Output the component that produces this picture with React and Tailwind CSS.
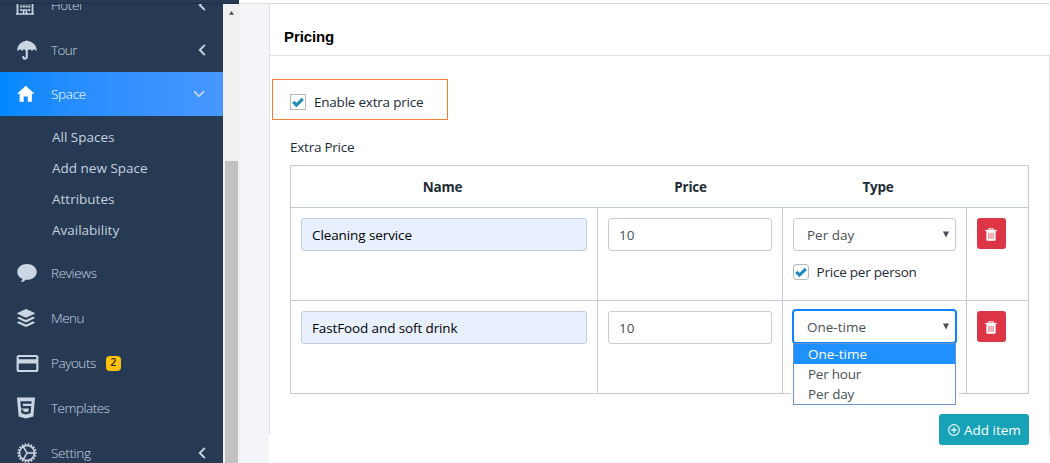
import React from "react";
import {
  IoIosText,
  IoIosAddCircleOutline,
  IoIosArrowBack,
  IoIosArrowDown,
  IoIosCog,
  IoLogoBuffer,
  IoLogoHtml5,
  IoMdCard,
  IoMdHome,
  IoMdUmbrella,
} from "react-icons/io";

function HotelIcon() {
  return (
    <svg className="ml-[-0.5px]" width="20" height="20" viewBox="0 0 20 20" fill="none" stroke="currentColor">
      <path d="M2.500 1v18M17.500 1v18M2 1.500h16" strokeWidth="1.800" />
      <path d="M5.200 5h10M5.200 8.300h10M5.200 11.600h10M5.200 14.900h2M13.200 14.900h2" strokeWidth="2" strokeDasharray="2 0.670" />
      <path d="M8.500 19v-4h3v4M1 19h18" strokeWidth="1.700" />
    </svg>
  );
}

function NavItem({ icon, label, tracking = "", arrow, active, badge }) {
  return (
    <div
      className={
        active
          ? "flex h-[44px] shrink-0 items-center bg-linear-to-r from-[#0088ff] to-[#4797ff] pl-[15px] pr-4 text-white"
          : "mb-px flex h-[44px] shrink-0 items-center pl-[15px] pr-[13px] text-[#cbd5e3]"
      }
    >
      <span className="flex w-[36px] shrink-0 items-center">{icon}</span>
      <span className={"text-[13.5px] font-light leading-5 " + tracking}>{label}</span>
      {badge && (
        <span className="ml-[10px] flex h-[15px] w-[15px] items-center justify-center rounded-[4px] bg-[#ffc107] text-[10.5px] font-semibold text-[#212529]">
          {badge}
        </span>
      )}
      {arrow && <span className="ml-auto flex text-[#cbd5e3]">{arrow}</span>}
    </div>
  );
}

function Collapsed() {
  return <IoIosArrowBack size={16} stroke="currentColor" strokeWidth={20} />;
}

function SubItem({ label, tracking = "" }) {
  return (
    <div className={"flex h-[31px] items-center pl-[52px] text-[13.5px] text-[#c5d1df] " + tracking}>{label}</div>
  );
}

function Checkbox({ rounded = "" }) {
  return (
    <span className={"flex h-4 w-4 shrink-0 items-center justify-center border border-[#b4b9be] bg-white " + rounded}>
      <svg width="12" height="12" viewBox="0 0 12 12" fill="none" stroke="#1e8cbe" strokeWidth="3.100">
        <path d="M1.200 5.800l3.200 3.200 6.400-6.200" />
      </svg>
    </span>
  );
}

function Field({ children, filled, tracking = "" }) {
  return (
    <div
      className={
        (filled ? "bg-[#e8f0fe] pl-[10px] text-black " : "bg-white pl-[10px] text-[#495057] ") +
        "flex h-[33px] items-center rounded-[3px] border border-[#c3cdda] pt-px text-[13.5px] " +
        tracking
      }
    >
      {children}
    </div>
  );
}

function Caret() {
  return (
    <svg className="mb-px" width="6" height="7" viewBox="0 0 6 7" fill="#495057">
      <path d="M0 0.500h6L3 6.500z" />
    </svg>
  );
}

function TrashButton() {
  return (
    <button className="flex h-[31px] w-[29px] items-center justify-center rounded-[3px] bg-[#dc3545] pr-px pt-px text-white">
      <svg width="12" height="13" viewBox="0 0 12 13" fill="none" stroke="currentColor">
        <path d="M0.300 2.500h11.400" strokeWidth="1.300" />
        <path d="M4 2.200V0.700h4v1.500" strokeWidth="1.100" />
        <path d="M1.400 3h9.200v9a.8.8 0 0 1-.8.8H2.200a.8.8 0 0 1-.8-.8z" fill="currentColor" stroke="none" />
        <path d="M3.900 4.700v6.300M6 4.700v6.300M8.100 4.700v6.300" stroke="#dc3545" strokeWidth="0.800" />
      </svg>
    </button>
  );
}

const cell = "border-r border-[#c3cad8] p-[10px]";

export default function App() {
  return (
    <div className="flex h-[463px] w-[1050px] flex-col overflow-hidden bg-white font-['Open_Sans','Noto_Sans',sans-serif] text-[13.5px] text-[#212b36]">
      <div className="flex h-1 shrink-0">
        <div className="w-[239px] border-b border-[#1c2f47] bg-[#263a53]" />
        <div className="ml-px flex-1 border-b border-[#dddddd]" />
      </div>

      <div className="flex h-[459px]">
        <nav className="flex w-[223px] flex-col overflow-hidden bg-[#263a53]">
          <div className="-mt-[21px] flex flex-col">
            <NavItem icon={<HotelIcon />} label="Hotel" tracking="tracking-[-0.4px]" arrow={<Collapsed />} />
            <NavItem icon={<IoMdUmbrella size={24} />} label="Tour" tracking="tracking-[-0.6px]" arrow={<Collapsed />} />
          </div>
          <div className="-mt-px flex flex-col">
            <NavItem
              icon={<IoMdHome size={21.5} />}
              label="Space"
              tracking="tracking-[-0.3px]"
              active
              arrow={<IoIosArrowDown size={16} stroke="currentColor" strokeWidth={12} />}
            />
          </div>
          <div className="flex h-[135px] shrink-0 flex-col pt-[6px]">
            <SubItem label="All Spaces" />
            <SubItem label="Add new Space" />
            <SubItem label="Attributes" />
            <SubItem label="Availability" />
          </div>
          <NavItem icon={<IoIosText size={24} />} label="Reviews" tracking="tracking-[-0.35px]" />
          <NavItem icon={<IoLogoBuffer size={24} className="-ml-px" />} label="Menu" tracking="tracking-[-0.5px]" />
          <NavItem icon={<IoMdCard size={25} />} label="Payouts" tracking="tracking-[-0.45px]" badge="2" />
          <NavItem icon={<IoLogoHtml5 size={24} className="-ml-px" />} label="Templates" tracking="tracking-[-0.5px]" />
          <NavItem icon={<IoIosCog size={24} stroke="currentColor" strokeWidth={6} />} label="Setting" tracking="tracking-[-0.3px]" arrow={<Collapsed />} />
        </nav>

        <div className="flex w-[17px] flex-col items-center bg-[#f0f0f0] pr-px">
          <svg className="mt-[7px] shrink-0" width="5" height="4" viewBox="0 0 5 4" fill="#505050">
            <path d="M2.500 0L5 3.800H0z" />
          </svg>
          <div className="mt-[146px] w-[13px] flex-1 bg-[#c1c1c1]" />
        </div>
        <div className="w-[29px] bg-[#f4f5f8]" />

        <main className="flex w-[781px] flex-col">
          <div className="flex h-[430px] flex-col border-l border-[#dfe2e5]">
            <div className="flex h-[52px] shrink-0 items-center border-b border-[#e1e1e1] pl-[14px] pt-[15px] font-['Liberation_Sans',Arial,sans-serif] text-[15px] font-bold tracking-[-0.1px] text-black">
              Pricing
            </div>
            <div className="flex flex-1 flex-col border-r border-[#e1e1e1]">
              <div className="ml-[2px] mt-[23px] flex h-[41px] w-[176px] items-center gap-2 border border-[#f58233] pl-[17px] pt-[5px]">
                <Checkbox />
                <span className="tracking-[-0.22px]">Enable extra price</span>
              </div>
              <div className="ml-5 mt-[17px] h-5 leading-5 tracking-[-0.25px]">Extra Price</div>

              <div className="ml-5 mt-2 w-[739px] border border-[#c3cad8]">
                <div className="grid h-[42px] grid-cols-[307px_185px_184px_61px] items-center border-b border-[#c3cad8] pt-[2px] text-center font-bold tracking-[-0.2px]">
                  <span className="pr-1">Name</span>
                  <span>Price</span>
                  <span className="pl-1.5">Type</span>
                </div>
                <div className="grid h-[93px] grid-cols-[307px_185px_184px_61px] border-b border-[#c3cad8]">
                  <div className={cell}><Field filled tracking="tracking-[-0.1px]">Cleaning service</Field></div>
                  <div className={cell}><Field>10</Field></div>
                  <div className={cell}>
                    <div className="flex h-[33px] items-center justify-between rounded-[3px] border border-[#c3cdda] pl-[13px] pr-[6px] pt-px text-[#495057]">
                      <span>Per day</span>
                      <Caret />
                    </div>
                    <div className="mt-[13px] flex h-4 items-center gap-[7.5px]">
                      <Checkbox rounded="rounded-[3px]" />
                      <span className="tracking-[-0.22px]">Price per person</span>
                    </div>
                  </div>
                  <div className="p-[10px]"><TrashButton /></div>
                </div>
                <div className="grid h-[92px] grid-cols-[307px_185px_184px_61px]">
                  <div className={cell}><Field filled tracking="tracking-[-0.12px]">FastFood and soft drink</Field></div>
                  <div className={cell}><Field>10</Field></div>
                  <div className={"relative " + cell}>
                    <div className="-mx-px -mt-[2px] flex h-[35px] items-center justify-between rounded-[4px] border-2 border-[#0a84ff] pl-[13px] pr-[6px] pt-px text-[#495057]">
                      <span>One-time</span>
                      <Caret />
                    </div>
                    <div className="absolute left-[10px] top-[42px] h-[62px] w-[163px] border border-[#6c93cf] bg-white leading-5 text-[#495057] shadow-[-2px_0_0_#fff,3px_0_0_#fff]">
                      <div className="h-5 bg-[#1e90ff] pl-[14px] text-white">One-time</div>
                      <div className="h-5 pl-[14px] tracking-[-0.25px]">Per hour</div>
                      <div className="h-5 pl-[14px] tracking-[-0.15px]">Per day</div>
                    </div>
                  </div>
                  <div className="p-[10px]"><TrashButton /></div>
                </div>
              </div>
            </div>
          </div>
          <div className="-mt-5 mr-[21px] flex justify-end">
            <button className="flex h-[31px] w-[90px] items-center gap-[3px] rounded-[3px] bg-[#17a2b8] pl-2 pt-px text-white">
              <IoIosAddCircleOutline size={14} stroke="currentColor" strokeWidth={12} />
              <span>Add item</span>
            </button>
          </div>
        </main>
      </div>
    </div>
  );
}
